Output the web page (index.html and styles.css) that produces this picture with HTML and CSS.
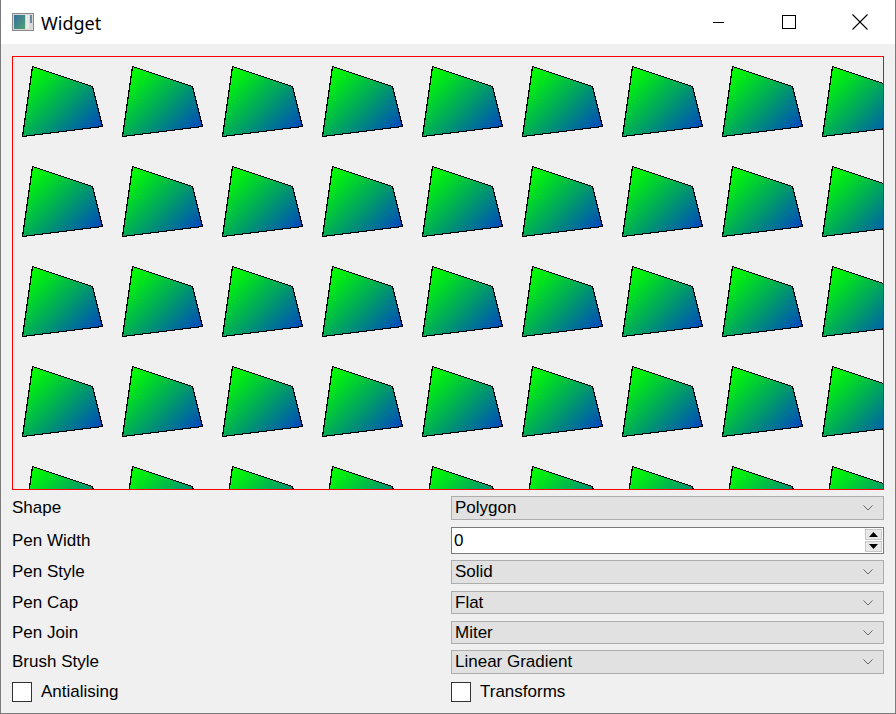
FILE: index.html
```html
<!DOCTYPE html>
<html>
<head>
<meta charset="utf-8">
<link rel="stylesheet" href="styles.css">
</head>
<body>
<div class="window">
  <div class="titlebar">
    <div class="title-left">
      <svg class="app-icon" width="22" height="18" viewBox="0 0 22 18">
        <defs>
          <linearGradient id="ig" x1="0" y1="0" x2="1" y2="1">
            <stop offset="0" stop-color="#3a6fa0"/>
            <stop offset="1" stop-color="#4aa070"/>
          </linearGradient>
        </defs>
        <rect x="0.5" y="0.5" width="21" height="17" fill="#d8d8d8" stroke="#8a8a8a"/>
        <rect x="2" y="2" width="11" height="14" fill="url(#ig)"/>
        <rect x="14" y="2" width="3" height="14" fill="#e8e8e8"/>
        <rect x="18" y="2" width="2" height="8" fill="#6a8aa0"/>
      </svg>
      <span class="title">Widget</span>
    </div>
    <div class="title-buttons">
      <div class="tbtn"><svg width="12" height="1" viewBox="0 0 12 1"><rect width="11" height="1" fill="#000"/></svg></div>
      <div class="tbtn"><svg width="14" height="14" viewBox="0 0 14 14"><rect x="0.5" y="0.5" width="13" height="13" fill="none" stroke="#000"/></svg></div>
      <div class="tbtn"><svg width="16" height="16" viewBox="0 0 16 16"><path d="M0.5 0.5 L15.5 15.5 M15.5 0.5 L0.5 15.5" stroke="#000" stroke-width="1.1"/></svg></div>
    </div>
  </div>
  <div class="content">
    <div class="canvas">
      <svg width="872" height="434" viewBox="0 0 872 434">
        <defs>
          <linearGradient id="grad" gradientUnits="userSpaceOnUse" x1="0" y1="0" x2="100" y2="100">
            <stop offset="0" stop-color="#00ff00"/>
            <stop offset="0.2" stop-color="#00fa04"/>
            <stop offset="1" stop-color="#0010ff"/>
          </linearGradient>
          <pattern id="tile" patternUnits="userSpaceOnUse" x="0" y="0" width="100" height="100">
            <polygon points="10.5,80.5 20.5,10.5 80.5,30.5 90.5,70.5" fill="url(#grad)" stroke="#000" stroke-width="1.2"/>
          </pattern>
        </defs>
        <rect x="0" y="0" width="872" height="434" fill="url(#tile)"/>
        <rect x="0.5" y="0.5" width="871" height="433" fill="none" stroke="#ff0000" stroke-width="1"/>
      </svg>
    </div>
    <div class="form">
      <div class="row r-shape">
        <div class="label">Shape</div>
        <div class="combo"><span>Polygon</span><svg class="chev" width="10" height="6" viewBox="0 0 10 6"><path d="M0.5 0.5 L5 5 L9.5 0.5" fill="none" stroke="#666"/></svg></div>
      </div>
      <div class="row r-width">
        <div class="label">Pen Width</div>
        <div class="spin"><span>0</span>
          <div class="spin-btns">
            <div class="sb"><svg width="9" height="5" viewBox="0 0 9 5"><path d="M0 5 L4.5 0 L9 5 Z" fill="#000"/></svg></div>
            <div class="sb"><svg width="9" height="5" viewBox="0 0 9 5"><path d="M0 0 L4.5 5 L9 0 Z" fill="#000"/></svg></div>
          </div>
        </div>
      </div>
      <div class="row r-style">
        <div class="label">Pen Style</div>
        <div class="combo"><span>Solid</span><svg class="chev" width="10" height="6" viewBox="0 0 10 6"><path d="M0.5 0.5 L5 5 L9.5 0.5" fill="none" stroke="#666"/></svg></div>
      </div>
      <div class="row r-cap">
        <div class="label">Pen Cap</div>
        <div class="combo"><span>Flat</span><svg class="chev" width="10" height="6" viewBox="0 0 10 6"><path d="M0.5 0.5 L5 5 L9.5 0.5" fill="none" stroke="#666"/></svg></div>
      </div>
      <div class="row r-join">
        <div class="label">Pen Join</div>
        <div class="combo"><span>Miter</span><svg class="chev" width="10" height="6" viewBox="0 0 10 6"><path d="M0.5 0.5 L5 5 L9.5 0.5" fill="none" stroke="#666"/></svg></div>
      </div>
      <div class="row r-brush">
        <div class="label">Brush Style</div>
        <div class="combo"><span>Linear Gradient</span><svg class="chev" width="10" height="6" viewBox="0 0 10 6"><path d="M0.5 0.5 L5 5 L9.5 0.5" fill="none" stroke="#666"/></svg></div>
      </div>
      <div class="row r-checks">
        <div class="check"><div class="box"></div><span>Antialising</span></div>
        <div class="check"><div class="box"></div><span>Transforms</span></div>
      </div>
    </div>
  </div>
</div>
</body>
</html>
```

FILE: styles.css
```css
* { box-sizing: border-box; }
html, body { margin: 0; padding: 0; }
body {
  width: 896px;
  height: 714px;
  overflow: hidden;
  font-family: "Liberation Sans", Arial, sans-serif;
  font-size: 17px;
  color: #000;
  background: #f0f0f0;
}
.window {
  width: 896px;
  height: 714px;
  border: 1px solid #7a7a7a;
  border-top: none;
  background: #f0f0f0;
  display: flex;
  flex-direction: column;
}
.titlebar {
  height: 44px;
  background: #fff;
  display: flex;
  justify-content: space-between;
  align-items: stretch;
  flex: none;
}
.title-left {
  display: flex;
  align-items: center;
  padding-left: 11px;
  gap: 7px;
}
.app-icon { display: block; margin-top: 0; }
.title {
  font-family: "Noto Sans", "Liberation Sans", sans-serif;
  font-size: 18px;
  margin-top: 2px;
}
.title-buttons { display: flex; }
.tbtn {
  width: 70px;
  display: flex;
  align-items: center;
  justify-content: center;
  margin-top: 0;
}
.tbtn:last-child { width: 71px; }
.content {
  padding: 12px 11px 0 11px;
  flex: 1;
  display: flex;
  flex-direction: column;
}
.canvas {
  width: 872px;
  height: 434px;
  overflow: hidden;
}
.canvas svg { display: block; shape-rendering: crispEdges; }
.form {
  display: flex;
  flex-direction: column;
  padding-top: 6px;
}
.row {
  display: grid;
  grid-template-columns: 439px 433px;
  align-items: center;
}
.label { line-height: 20px; }
.combo {
  height: 24px;
  border: 1px solid #adadad;
  background: #e1e1e1;
  display: flex;
  align-items: center;
  justify-content: space-between;
  padding: 0 10px 0 3px;
  line-height: 20px;
}
.chev { display: block; }
.spin {
  height: 27px;
  border: 1px solid #7a7a7a;
  background: #fff;
  display: flex;
  align-items: center;
  justify-content: space-between;
  padding: 0 1px 0 2px;
}
.spin-btns {
  display: flex;
  flex-direction: column;
  gap: 1px;
  width: 17px;
  height: 23px;
}
.sb {
  flex: 1;
  background: #e8e8e8;
  border: 1px solid #c8c8c8;
  display: flex;
  align-items: center;
  justify-content: center;
}
.sb svg { display: block; }
.r-shape { height: 24px; margin-bottom: 7px; }
.r-width { height: 27px; margin-bottom: 6px; }
.r-style { height: 24px; margin-bottom: 7px; }
.r-cap { height: 23px; margin-bottom: 7px; }
.r-join { height: 23px; margin-bottom: 6px; }
.r-brush { height: 24px; margin-bottom: 7px; }
.r-cap .combo, .r-join .combo { height: 23px; }
.r-checks { height: 21px; }
.check {
  display: flex;
  align-items: center;
  gap: 9px;
}
.box {
  width: 20px;
  height: 20px;
  border: 1px solid #333;
  background: #fff;
}
```
